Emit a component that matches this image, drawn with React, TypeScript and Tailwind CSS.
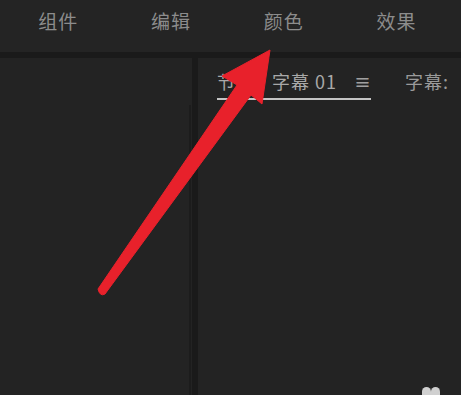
export default function App() {
  const tabs = ['组件', '编辑', '颜色', '效果'];

  return (
    <div
      className="relative w-[461px] h-[395px] overflow-hidden bg-[#1a1a1a] flex flex-col"
      style={{ fontFamily: '"Noto Sans CJK SC", "Noto Sans", sans-serif' }}
    >
      {/* workspace bar */}
      <div className="h-[52px] bg-[#242424] grid grid-cols-4 pl-[2px] pr-[8px] pb-[10px] items-center">
        {tabs.map((t) => (
          <div key={t} className="text-center text-[19px] text-[#8c8c8c] tracking-[1px]">
            {t}
          </div>
        ))}
      </div>

      <div className="flex-1 flex gap-[6px] pt-[6px]">
        {/* left panel */}
        <div className="w-[192px] bg-[#232323] flex justify-end pt-[47px]">
          <div className="w-[2px] bg-[#1c1c1c] mr-[1px]" />
        </div>

        {/* program monitor */}
        <div className="flex-1 bg-[#232323] flex flex-col">
          <div className="flex items-end h-[42px] pl-[19px]">
            <div className="flex items-center border-b-2 border-[#c4c4c4] pb-[8px] text-[18px] text-[#a8a8a8] leading-none">
              <span>节目:</span>
              <span className="ml-[14px] tracking-[1px]">字幕 01</span>
              <span className="ml-[17px] text-[17px] font-bold text-[#a0a0a0]">≡</span>
            </div>
            <span className="ml-[34px] mb-[10px] text-[18px] text-[#9a9a9a] leading-none tracking-[1px]">字幕:</span>
          </div>
        </div>
      </div>

      {/* cursor blobs at bottom right */}
      <div className="absolute left-[422px] top-[387px] w-[9px] h-[12px] rounded-full bg-[#d0d0d0]" />
      <div className="absolute left-[431px] top-[387px] w-[9px] h-[12px] rounded-full bg-[#d0d0d0]" />

      {/* red annotation arrow */}
      <svg className="absolute left-0 top-0" width="461" height="395" viewBox="0 0 461 395">
        <path
          d="M98 289 L237 85 L222 76 L270 50 L262 104 L251 95 L105 294 Q100 297 98 289 Z"
          fill="#e8212b"
          stroke="#e8212b"
          strokeWidth="1"
          strokeLinejoin="round"
        />
      </svg>
    </div>
  );
}
